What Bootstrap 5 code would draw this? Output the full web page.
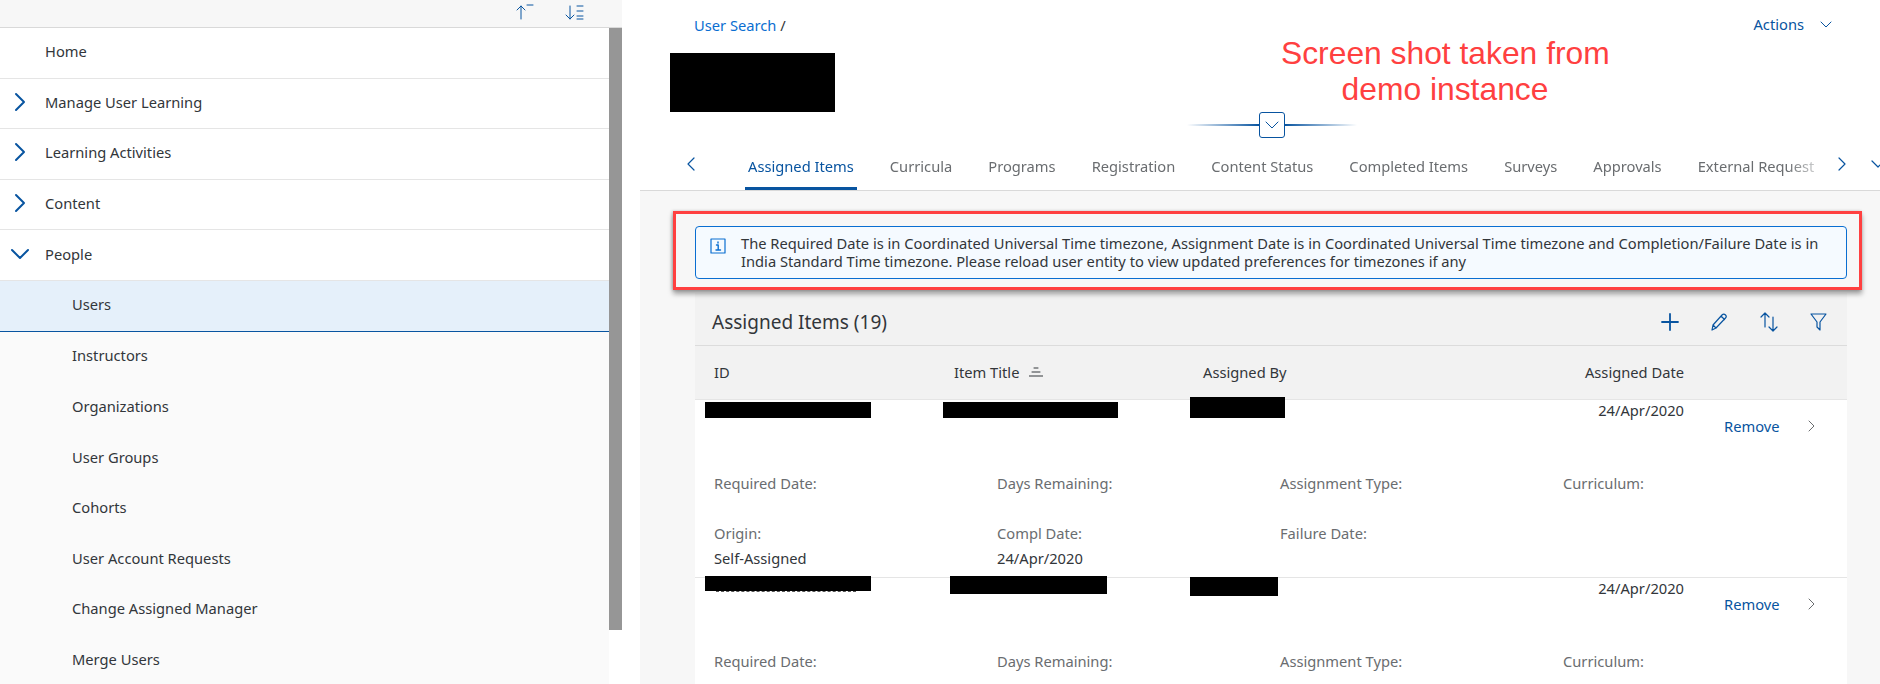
<!DOCTYPE html>
<html lang="en">
<head>
<meta charset="utf-8">
<title>Assigned Items</title>
<link rel="stylesheet" href="https://cdn.jsdelivr.net/npm/bootstrap@5.3.0/dist/css/bootstrap.min.css">
<style>
html,body{height:684px;overflow:hidden;background:#fff}
body{font-family:"Noto Sans",sans-serif;font-size:14.7px;color:#32363a;line-height:18px}
svg{display:block;fill:none;stroke-linecap:round;stroke-linejoin:round}
.shell{height:684px;width:1880px;overflow:hidden}
.side{width:622px;flex:none}
.side-top{height:28px;background:#f7f7f7;border-bottom:1px solid #d9d9d9;padding-right:37px;gap:30px}
.side-top svg{stroke:#0854a0;stroke-width:1}
.side-body{height:656px;overflow:hidden}
.side-list{width:609px;flex:none}
.side-list .list-group-item{height:50.6px;padding:0 0 3px;border-width:0 0 1.5px;border-color:#e5e5e5;border-radius:0;color:#32363a;background:#fff;font-size:14.7px;display:flex;align-items:center;flex:none}
.side-list .list-group-item svg{stroke:#0854a0;stroke-width:2;width:20px;height:20px;margin-left:10px;margin-right:15px;flex:none}
.side-list .top-item{padding-left:45px}
.side-list .top-item.has-arrow{padding-left:0}
.side-list .sub-item{padding-left:72px;background:#fafafa;border-bottom:0}
.side-list .sub-item.is-active{background:#e5f0fa;border-bottom:1.5px solid #0854a0;height:50.6px}
.side-track{width:13px;flex:none}
.side-thumb{height:602px;background:#969696}
.gutter{width:18px;flex:none}
.main{width:1240px;flex:none;background:#f7f7f7}
.head{height:191px;background:#fff;border-bottom:1px solid #d9d9d9}
.crumb-row{height:53px;padding:16px 48px 0 54px}
.crumb-link{color:#0a6ed1;text-decoration:none}
.act-link{color:#0854a0;text-decoration:none;height:18px;margin-top:-1px}
.name-block{width:165px;height:59px;margin-left:30px;background:#000}
.handle-row{height:26px;margin-left:547px}
.handle-line{width:72px;height:2px}
.handle-l{background:linear-gradient(90deg,rgba(8,84,160,0),#0854a0)}
.handle-r{background:linear-gradient(90deg,#0854a0,rgba(8,84,160,0))}
.handle-btn{width:26px;height:26px;border:1px solid #0854a0;border-radius:3px;background:#fff;padding:0;display:flex;align-items:center;justify-content:center}
.handle-btn svg{stroke:#0854a0;stroke-width:1}
.tabs-row{height:52px;padding-left:45px;overflow:hidden}
.tab-prev{width:60px;flex:none}
.tab-prev svg,.tab-next svg{stroke:#0854a0;stroke-width:1.2}
.tab-strip{flex-wrap:nowrap;width:1074px;flex:none;overflow:hidden;gap:30px;-webkit-mask-image:linear-gradient(90deg,#000 97%,rgba(0,0,0,.25));mask-image:linear-gradient(90deg,#000 97%,rgba(0,0,0,.25))}
.tab-strip .nav-link{padding:0 3px;height:52px;line-height:56px;color:#6a6d70;white-space:nowrap;border-bottom:3px solid transparent;font-size:14.7px}
.tab-strip .nav-link.active{color:#0854a0;border-bottom-color:#0854a0;border-radius:0}
.tab-next{margin-left:17px;flex:none}
.tab-more{margin-left:22px;flex:none;stroke:#0854a0;stroke-width:1.2}
.content{padding:35px 33px 0 55px}
.strip-msg{margin:0;height:53px;padding:7px 20px 0 45px;background:#f5faff;border:1px solid #0a6ed1;border-radius:4px;color:#32363a;font-size:14.7px;line-height:18px;white-space:nowrap}
.strip-icon{position:absolute;left:14px;top:11px;stroke:#0a6ed1}
.annot-box{position:absolute;left:33px;top:211px;width:1189px;height:79px;border:3px solid #ff4040;box-shadow:0 4px 5px rgba(0,0,0,.35),-1px 0 3px rgba(0,0,0,.2);pointer-events:none}
.annot-text{position:absolute;left:641px;top:35px;width:328px;text-align:center;font-family:"Liberation Sans",sans-serif;color:#ff4040;font-size:31.8px;line-height:36px;white-space:nowrap}
.tbl{width:1152px;margin-top:14px}
.tbl-bar{height:53px;padding:6px 19px 0 17px;background:#f2f2f2;border-bottom:1.5px solid #dcdcdc}
.tbl-title{font-size:19px;line-height:24px;color:#32363a}
.tbl-tools{gap:31px}
.tbl-tools svg{stroke:#0854a0;stroke-width:1.2}
.cols{display:grid;grid-template-columns:248px 247px 350px 144px 1fr}
.tbl-head{height:54px;padding-bottom:2px;background:#f2f2f2;border-bottom:1px solid #e5e5e5;align-items:center}
.th-id{padding-left:19px}
.th-title{padding-left:11px;gap:10px}
.th-by{padding-left:13px}
.th-date{text-align:right}
.tbl-row{height:178px;background:#fff;border-bottom:1px solid #e5e5e5}
.row-top{height:71px}
.cell-date{text-align:right;padding-top:1px}
.row-action{padding:17px 29px 0 40px}
.row-action a{color:#0854a0;text-decoration:none}
.row-action svg{stroke:#6a6d70;stroke-width:1}
.redact{background:#000}
.rd-a1{width:166px;height:16px;margin:2px 0 0 10px}
.rd-b1{width:175px;height:16px;margin-top:2px}
.rd-c1{width:95px;height:21px;margin-top:-3px}
.rd-a2{width:166px;height:15px;margin:-2px 0 0 10px}
.rd-a2-rest{width:140px;height:2px;margin-left:21px;border-top:1px dashed #555}
.rd-b2{width:157px;height:18px;margin:-2px 0 0 7px}
.rd-c2{width:88px;height:19px;margin-top:-1px}
.detail{width:1132px;margin-left:19px}
.detail>div{height:50px;line-height:24px;color:#6a6d70}
.detail .val{color:#32363a;line-height:26px}
</style>
</head>
<body>
<div class="shell d-flex">
  <aside class="side">
    <div class="side-top d-flex justify-content-end align-items-start pt-1">
      <svg width="20" height="16" viewBox="0 0 20 16"><path d="M6 15V2M2 6l4-4 4 4M12 1h6"/></svg>
      <svg width="20" height="16" viewBox="0 0 20 16"><path d="M5 2v13M1 11l4 4 4-4M12 2h6M12 7h6M12 12h6M12 15h6"/></svg>
    </div>
    <div class="side-body d-flex">
      <div class="side-list list-group list-group-flush">
        <a class="list-group-item top-item">Home</a>
        <a class="list-group-item top-item has-arrow"><svg viewBox="0 0 20 20"><path d="M6 2l8 8-8 8"/></svg>Manage User Learning</a>
        <a class="list-group-item top-item has-arrow"><svg viewBox="0 0 20 20"><path d="M6 2l8 8-8 8"/></svg>Learning Activities</a>
        <a class="list-group-item top-item has-arrow"><svg viewBox="0 0 20 20"><path d="M6 2l8 8-8 8"/></svg>Content</a>
        <a class="list-group-item top-item has-arrow"><svg viewBox="0 0 20 20"><path d="M2 6l8 8 8-8"/></svg>People</a>
        <a class="list-group-item sub-item is-active">Users</a>
        <a class="list-group-item sub-item">Instructors</a>
        <a class="list-group-item sub-item">Organizations</a>
        <a class="list-group-item sub-item">User Groups</a>
        <a class="list-group-item sub-item">Cohorts</a>
        <a class="list-group-item sub-item">User Account Requests</a>
        <a class="list-group-item sub-item">Change Assigned Manager</a>
        <a class="list-group-item sub-item">Merge Users</a>
      </div>
      <div class="side-track"><div class="side-thumb"></div></div>
    </div>
  </aside>
  <div class="gutter"></div>
  <main class="main position-relative">
    <div class="head">
      <div class="crumb-row d-flex justify-content-between align-items-start">
        <div><a class="crumb-link" href="#">User Search</a> /</div>
        <a class="act-link d-flex align-items-center gap-3" href="#">Actions <svg width="12" height="12" viewBox="0 0 12 12" stroke="#0854a0"><path d="M1 4l5 5 5-5"/></svg></a>
      </div>
      <div class="name-block"></div>
      <div class="handle-row d-flex align-items-center">
        <div class="handle-line handle-l"></div>
        <button class="handle-btn" type="button" aria-label="Collapse"><svg width="16" height="16" viewBox="0 0 16 16"><path d="M2 5l6 6 6-6"/></svg></button>
        <div class="handle-line handle-r"></div>
      </div>
      <div class="tabs-row d-flex align-items-center">
        <div class="tab-prev"><svg width="12" height="16" viewBox="0 0 12 16"><path d="M9 2L3 8l6 6"/></svg></div>
        <nav class="nav tab-strip">
          <a class="nav-link active" href="#">Assigned Items</a>
          <a class="nav-link" href="#">Curricula</a>
          <a class="nav-link" href="#">Programs</a>
          <a class="nav-link" href="#">Registration</a>
          <a class="nav-link" href="#">Content Status</a>
          <a class="nav-link" href="#">Completed Items</a>
          <a class="nav-link" href="#">Surveys</a>
          <a class="nav-link" href="#">Approvals</a>
          <a class="nav-link" href="#">External Request</a>
        </nav>
        <div class="tab-next"><svg width="12" height="16" viewBox="0 0 12 16"><path d="M3 2l6 6-6 6"/></svg></div>
        <svg class="tab-more" width="16" height="16" viewBox="0 0 16 16"><path d="M2 5l6 6 6-6"/></svg>
      </div>
    </div>
    <div class="content">
      <div class="alert strip-msg position-relative" role="alert">
        <svg class="strip-icon" width="16" height="16" viewBox="0 0 16 16"><rect x="1" y="1" width="14" height="14" stroke-width="1.2"/><path d="M8 4v1M6.500 7H8.200v5M6 12h4.500" stroke-width="1.4"/></svg>
        The Required Date is in Coordinated Universal Time timezone, Assignment Date is in Coordinated Universal Time timezone and Completion/Failure Date is in<br>India Standard Time timezone. Please reload user entity to view updated preferences for timezones if any
      </div>
      <section class="tbl">
        <div class="tbl-bar d-flex justify-content-between align-items-center">
          <div class="tbl-title">Assigned Items (19)</div>
          <div class="tbl-tools d-flex align-items-center">
            <svg width="18" height="18" viewBox="0 0 18 18"><path d="M9 1v16M1 9h16" stroke-width="1.8"/></svg>
            <svg width="18" height="18" viewBox="0 0 18 18"><path d="M2 17l1-5L12 2c1-1 2.500-1 3.500 0s.5 2.500 0 3L6 15zM3 12l3 3M11 3l3.500 3.500"/></svg>
            <svg width="20" height="20" viewBox="0 0 20 20"><path d="M6 15V1M2 5l4-4 4 4M14 5v14M10 15l4 4 4-4"/></svg>
            <svg width="18" height="20" viewBox="0 0 18 20"><path d="M1 2h15l-6 8v8l-3-3v-5z"/></svg>
          </div>
        </div>
        <div class="cols tbl-head">
          <div class="th-id">ID</div>
          <div class="th-title d-flex align-items-center">Item Title <svg width="14" height="12" viewBox="0 0 14 12" stroke="#32363a"><path d="M5 2h4M3 6h8M0 10h14"/></svg></div>
          <div class="th-by">Assigned By</div>
          <div class="th-date">Assigned Date</div>
          <div></div>
        </div>
        <div class="tbl-row">
          <div class="cols row-top">
            <div><div class="redact rd-a1"></div></div>
            <div><div class="redact rd-b1"></div></div>
            <div><div class="redact rd-c1"></div></div>
            <div class="cell-date">24/Apr/2020</div>
            <div class="row-action d-flex justify-content-between"><a href="#">Remove</a><svg width="12" height="18" viewBox="0 0 12 18"><path d="M3 4l5 5-5 5"/></svg></div>
          </div>
          <div class="detail row g-0">
            <div class="col-3">Required Date:</div>
            <div class="col-3">Days Remaining:</div>
            <div class="col-3">Assignment Type:</div>
            <div class="col-3">Curriculum:</div>
            <div class="col-3">Origin:<div class="val">Self-Assigned</div></div>
            <div class="col-3">Compl Date:<div class="val">24/Apr/2020</div></div>
            <div class="col-3">Failure Date:</div>
            <div class="col-3"></div>
          </div>
        </div>
        <div class="tbl-row">
          <div class="cols row-top">
            <div><div class="redact rd-a2"></div><div class="rd-a2-rest"></div></div>
            <div><div class="redact rd-b2"></div></div>
            <div><div class="redact rd-c2"></div></div>
            <div class="cell-date">24/Apr/2020</div>
            <div class="row-action d-flex justify-content-between"><a href="#">Remove</a><svg width="12" height="18" viewBox="0 0 12 18"><path d="M3 4l5 5-5 5"/></svg></div>
          </div>
          <div class="detail row g-0">
            <div class="col-3">Required Date:</div>
            <div class="col-3">Days Remaining:</div>
            <div class="col-3">Assignment Type:</div>
            <div class="col-3">Curriculum:</div>
          </div>
        </div>
      </section>
    </div>
    <div class="annot-box"></div>
    <div class="annot-text">Screen shot taken from<br>demo instance</div>
  </main>
</div>
</body>
</html>
